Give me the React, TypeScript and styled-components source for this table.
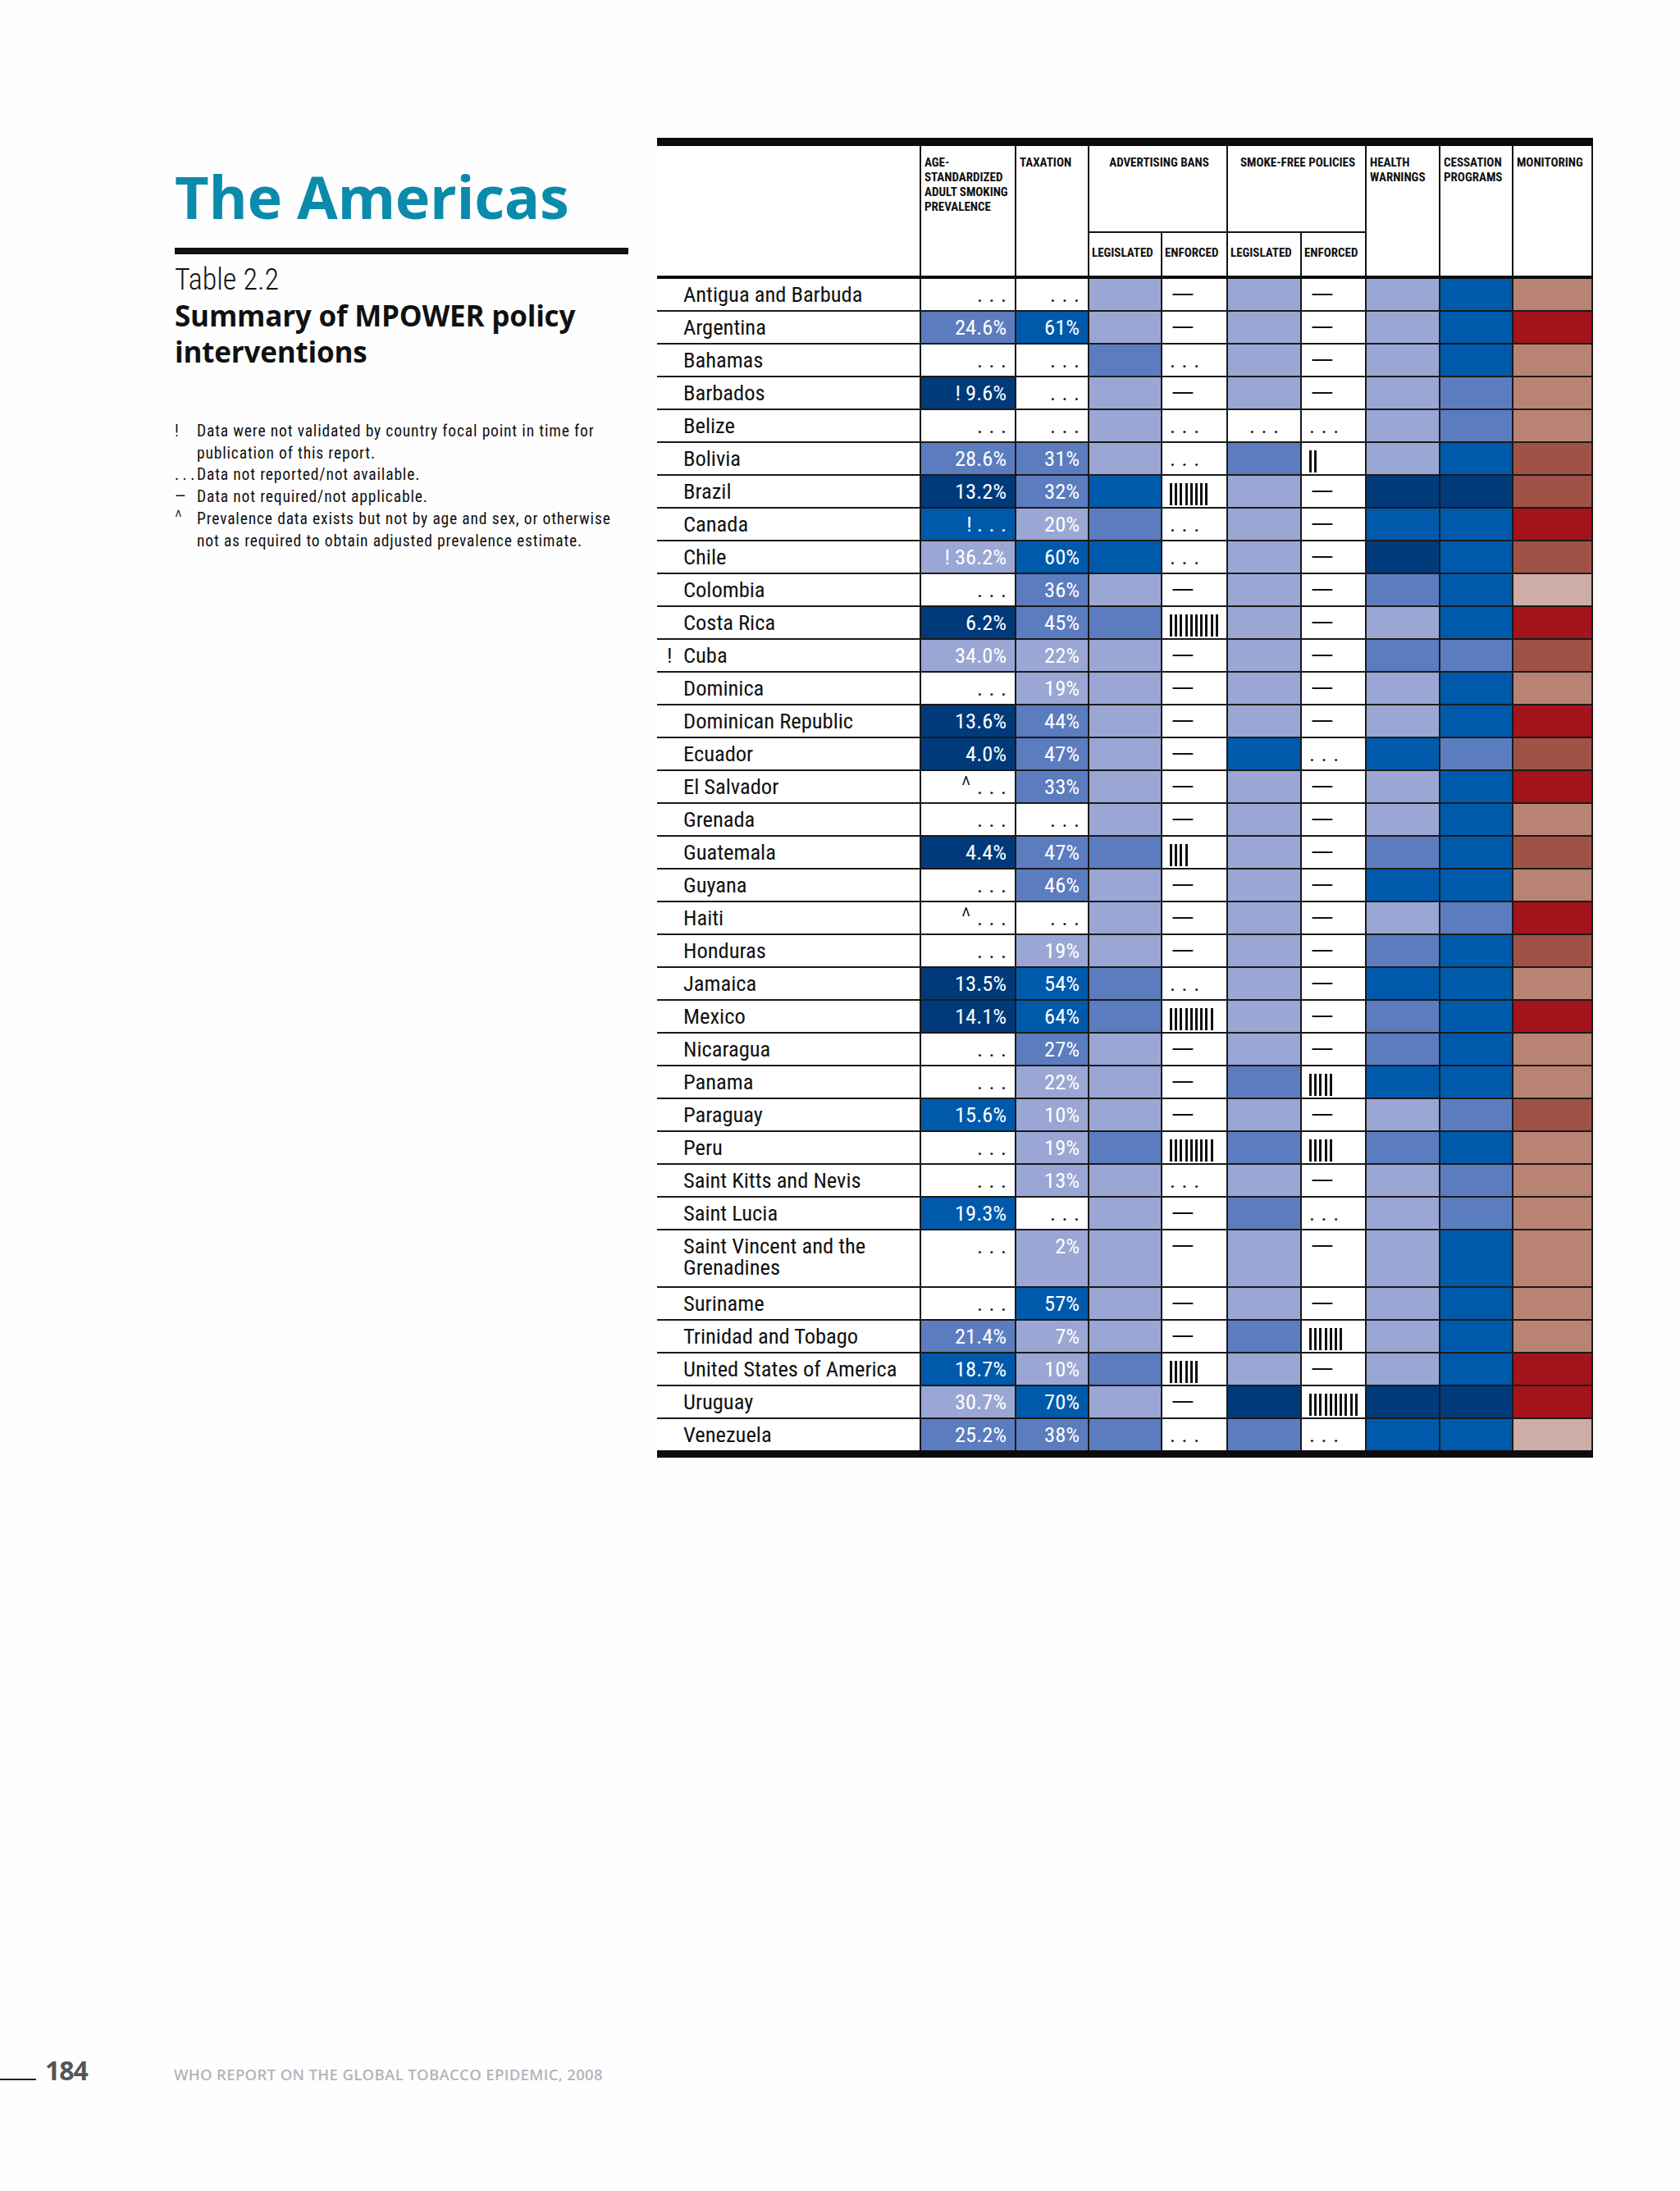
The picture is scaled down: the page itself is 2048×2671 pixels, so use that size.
import React from "react";
import styled, { createGlobalStyle } from "styled-components";

const COND = `"Roboto Condensed", "Open Sans", "Liberation Sans", sans-serif`;
const HUM = `"Open Sans", "Noto Sans", "Liberation Sans", sans-serif`;

const GlobalStyle = createGlobalStyle`
  html, body { margin: 0; padding: 0; background: #fefefe; }
  body { font-family: ${COND}; color: #111; }
`;

const C: Record<string, string> = {
  W: "#ffffff",
  L: "#9aa7d4",
  M: "#5b7cbf",
  S: "#005aac",
  N: "#003a7a",
  T: "#b88373",
  R: "#a3141c",
  B: "#a05246",
  P: "#cdada5",
};

type Sym = "-" | "." | number;
interface Row {
  name: string;
  flag?: string;
  prev: string;
  pc: string;
  tax: string;
  tc: string;
  advL: string;
  advE: Sym;
  sfL: string;
  sfE: Sym;
  hw: string;
  ces: string;
  mon: string;
  tall?: boolean;
}

const D = ". . .";

const r = (
  name: string,
  prev: string,
  pc: string,
  tax: string,
  tc: string,
  advL: string,
  advE: Sym,
  sfL: string,
  sfE: Sym,
  hw: string,
  ces: string,
  mon: string,
  extra: Partial<Row> = {}
): Row => ({ name, prev, pc, tax, tc, advL, advE, sfL, sfE, hw, ces, mon, ...extra });

const ROWS: Row[] = [
  r("Antigua and Barbuda", D, "W", D, "W", "L", "-", "L", "-", "L", "S", "T"),
  r("Argentina", "24.6%", "M", "61%", "S", "L", "-", "L", "-", "L", "S", "R"),
  r("Bahamas", D, "W", D, "W", "M", ".", "L", "-", "L", "S", "T"),
  r("Barbados", "! 9.6%", "N", D, "W", "L", "-", "L", "-", "L", "M", "T"),
  r("Belize", D, "W", D, "W", "L", ".", ".", ".", "L", "M", "T"),
  r("Bolivia", "28.6%", "M", "31%", "M", "L", ".", "M", 2, "L", "S", "B"),
  r("Brazil", "13.2%", "N", "32%", "M", "S", 8, "L", "-", "N", "N", "B"),
  r("Canada", "! . . .", "S", "20%", "L", "M", ".", "L", "-", "S", "S", "R"),
  r("Chile", "! 36.2%", "L", "60%", "S", "S", ".", "L", "-", "N", "S", "B"),
  r("Colombia", D, "W", "36%", "M", "L", "-", "L", "-", "M", "S", "P"),
  r("Costa Rica", "6.2%", "N", "45%", "M", "M", 10, "L", "-", "L", "S", "R"),
  r("Cuba", "34.0%", "L", "22%", "L", "L", "-", "L", "-", "M", "M", "B", { flag: "!" }),
  r("Dominica", D, "W", "19%", "L", "L", "-", "L", "-", "L", "S", "T"),
  r("Dominican Republic", "13.6%", "N", "44%", "M", "L", "-", "L", "-", "L", "S", "R"),
  r("Ecuador", "4.0%", "N", "47%", "M", "L", "-", "S", ".", "S", "M", "B"),
  r("El Salvador", "^ . . .", "W", "33%", "M", "L", "-", "L", "-", "L", "S", "R"),
  r("Grenada", D, "W", D, "W", "L", "-", "L", "-", "L", "S", "T"),
  r("Guatemala", "4.4%", "N", "47%", "M", "M", 4, "L", "-", "M", "S", "B"),
  r("Guyana", D, "W", "46%", "M", "L", "-", "L", "-", "S", "S", "T"),
  r("Haiti", "^ . . .", "W", D, "W", "L", "-", "L", "-", "L", "M", "R"),
  r("Honduras", D, "W", "19%", "L", "L", "-", "L", "-", "M", "S", "B"),
  r("Jamaica", "13.5%", "N", "54%", "S", "M", ".", "L", "-", "S", "S", "T"),
  r("Mexico", "14.1%", "N", "64%", "S", "M", 9, "L", "-", "M", "S", "R"),
  r("Nicaragua", D, "W", "27%", "M", "L", "-", "L", "-", "M", "S", "T"),
  r("Panama", D, "W", "22%", "L", "L", "-", "M", 5, "S", "S", "T"),
  r("Paraguay", "15.6%", "S", "10%", "L", "L", "-", "L", "-", "L", "M", "B"),
  r("Peru", D, "W", "19%", "L", "M", 9, "M", 5, "M", "S", "T"),
  r("Saint Kitts and Nevis", D, "W", "13%", "L", "L", ".", "L", "-", "L", "M", "T"),
  r("Saint Lucia", "19.3%", "S", D, "W", "L", "-", "M", ".", "L", "M", "T"),
  r("Saint Vincent and the Grenadines", D, "W", "2%", "L", "L", "-", "L", "-", "L", "S", "T", { tall: true }),
  r("Suriname", D, "W", "57%", "S", "L", "-", "L", "-", "L", "S", "T"),
  r("Trinidad and Tobago", "21.4%", "M", "7%", "L", "L", "-", "M", 7, "L", "S", "T"),
  r("United States of America", "18.7%", "S", "10%", "L", "M", 6, "L", "-", "L", "S", "R"),
  r("Uruguay", "30.7%", "L", "70%", "S", "L", "-", "N", 10, "N", "N", "R"),
  r("Venezuela", "25.2%", "M", "38%", "M", "M", ".", "M", ".", "S", "S", "P"),
];

const COLS = "320px 114px 87px 87px 78px 88px 77px 88px 87px 95px";

/* ---------- page ---------- */

const Page = styled.div`
  width: 2048px;
  min-height: 2671px;
  box-sizing: border-box;
  padding-top: 168px;
  display: flex;
  flex-direction: column;
`;

const Main = styled.div`
  display: flex;
  align-items: flex-start;
  padding-left: 213px;
`;

const Side = styled.aside`
  width: 553px;
  flex: none;
`;

const Title = styled.h1`
  margin: 34.5px 0 0;
  font-family: ${HUM};
  font-weight: 700;
  font-size: 72px;
  line-height: 72px;
  color: #0b8bab;
  letter-spacing: -0.3px;
`;

const SideRule = styled.div`
  margin-top: 27.5px;
  height: 8px;
  background: #111;
`;

const TableNo = styled.div`
  margin-top: 12.8px;
  font-family: ${COND};
  font-weight: 300;
  font-size: 36px;
  line-height: 37px;
  color: #111;
`;

const TableName = styled.h2`
  margin: 3.6px 0 0;
  font-family: ${HUM};
  font-weight: 700;
  font-size: 35px;
  line-height: 44px;
  color: #111;
  letter-spacing: -0.2px;
`;

const Notes = styled.div`
  margin-top: 61.6px;
  display: grid;
  grid-template-columns: 27px 1fr;
  font-family: ${COND};
  font-size: 19.5px;
  line-height: 26.7px;
  color: #111;
`;

const NoteMark = styled.span`
  white-space: nowrap;
`;

const NoteText = styled.span`
  white-space: nowrap;
  letter-spacing: 0.85px;
`;

const Caret = styled.span<{ $size: number }>`
  font-size: ${(p) => p.$size}px;
  font-weight: 300;
  line-height: 0;
`;

/* ---------- table ---------- */

const TableWrap = styled.div`
  margin-left: 35px;
  width: 1141px;
  flex: none;
`;

const Bar = styled.div<{ $h: number }>`
  height: ${(p) => p.$h}px;
  background: #0c0c0c;
`;

const HeadGrid = styled.div`
  display: grid;
  grid-template-columns: ${COLS};
  grid-template-rows: 104px 52px;
  gap: 2px;
  padding-right: 2px;
  background: #141414;
`;

const HeadCell = styled.div<{ $col: string; $row: string; $center?: boolean; $mid?: boolean }>`
  grid-column: ${(p) => p.$col};
  grid-row: ${(p) => p.$row};
  background: #fff;
  box-sizing: border-box;
  padding: ${(p) => (p.$mid ? "0 1px 5px 3px" : "10.5px 1px 0 4px")};
  display: flex;
  flex-direction: column;
  justify-content: ${(p) => (p.$mid ? "center" : "flex-start")};
  align-items: ${(p) => (p.$center ? "center" : "flex-start")};
  font-family: ${COND};
  font-weight: 700;
  font-size: 15px;
  line-height: 18px;
  color: #111;
  white-space: nowrap;
  text-transform: uppercase;
`;

const BodyGrid = styled.div<{ $rows: string }>`
  display: grid;
  grid-template-columns: ${COLS};
  grid-template-rows: ${(p) => p.$rows};
  gap: 2px;
  padding-right: 2px;
  background: #1a1a1a;
`;

const NameCell = styled.div`
  background: #fff;
  display: flex;
  align-items: flex-start;
  box-sizing: border-box;
  padding: 6px 10px 0 12px;
  font-size: 26.5px;
  line-height: 26px;
  color: #111;
`;

const Flag = styled.span`
  width: 20px;
  flex: none;
`;

const ValueCell = styled.div<{ $bg: string }>`
  background: ${(p) => C[p.$bg]};
  color: ${(p) => (p.$bg === "W" ? "#111" : "#fff")};
  box-sizing: border-box;
  padding: 6px 10px 0 0;
  text-align: right;
  font-size: 26.5px;
  line-height: 26px;
  white-space: nowrap;
`;

const Dots = styled.span`
  word-spacing: 1.5px;
`;

const ColorCell = styled.div<{ $bg: string }>`
  background: ${(p) => C[p.$bg]};
`;

const SymCell = styled.div<{ $center?: boolean }>`
  background: #fff;
  box-sizing: border-box;
  padding: 6px 0 0 ${(p) => (p.$center ? "0" : "9px")};
  text-align: ${(p) => (p.$center ? "center" : "left")};
  font-size: 26.5px;
  line-height: 26px;
  color: #111;
  white-space: nowrap;
`;

const DashMark = styled.span`
  display: inline-block;
  transform: scaleX(1.7);
  transform-origin: left center;
`;

const Bars = styled.div`
  display: flex;
  gap: 3.2px;
  margin-top: 3px;
`;

const Tick = styled.span`
  width: 3px;
  height: 27px;
  background: #111;
`;

const Value = ({ v }: { v: string }) => {
  if (v.endsWith(D)) {
    const pre = v.slice(0, v.length - D.length);
    return (
      <>
        {pre.startsWith("^") ? <Caret $size={32}>^ </Caret> : pre}
        <Dots>{D}</Dots>
      </>
    );
  }
  return <>{v}</>;
};

const Symbol = ({ s }: { s: Sym }) => {
  if (s === "-")
    return (
      <SymCell>
        <DashMark>—</DashMark>
      </SymCell>
    );
  if (s === ".")
    return (
      <SymCell>
        <Dots>{D}</Dots>
      </SymCell>
    );
  return (
    <SymCell>
      <Bars>
        {Array.from({ length: s }).map((_, i) => (
          <Tick key={i} />
        ))}
      </Bars>
    </SymCell>
  );
};

/* ---------- footer ---------- */

const Footer = styled.footer`
  margin-top: auto;
  padding-bottom: 131px;
  display: flex;
  align-items: baseline;
`;

const FootLine = styled.span`
  display: inline-block;
  width: 44px;
  height: 2px;
  background: #222;
`;

const PageNo = styled.span`
  margin-left: 11px;
  font-family: ${HUM};
  font-weight: 700;
  font-size: 32px;
  line-height: 32px;
  color: #555;
  letter-spacing: -1px;
`;

const FootText = styled.span`
  margin-left: 105px;
  font-family: ${HUM};
  font-weight: 600;
  font-size: 18.5px;
  line-height: 18px;
  letter-spacing: 0.35px;
  color: #b4b4bb;
`;

export default function App() {
  const rows = ROWS.map((x) => (x.tall ? "68px" : "38px")).join(" ");
  return (
    <>
      <GlobalStyle />
      <Page>
        <Main>
          <Side>
            <Title>The Americas</Title>
            <SideRule />
            <TableNo>Table 2.2</TableNo>
            <TableName>
              Summary of MPOWER policy
              <br />
              interventions
            </TableName>
            <Notes>
              <NoteMark>!</NoteMark>
              <NoteText>
                Data were not validated by country focal point in time for
                <br />
                publication of this report.
              </NoteText>
              <NoteMark>. . .</NoteMark>
              <NoteText>Data not reported/not available.</NoteText>
              <NoteMark>—</NoteMark>
              <NoteText>Data not required/not applicable.</NoteText>
              <NoteMark>
                <Caret $size={24}>^</Caret>
              </NoteMark>
              <NoteText>
                Prevalence data exists but not by age and sex, or otherwise
                <br />
                not as required to obtain adjusted prevalence estimate.
              </NoteText>
            </Notes>
          </Side>

          <TableWrap>
            <Bar $h={10} />
            <HeadGrid>
              <HeadCell $col="1" $row="1 / 3" />
              <HeadCell $col="2" $row="1 / 3">
                <span>Age-</span>
                <span>Standardized</span>
                <span>Adult smoking</span>
                <span>Prevalence</span>
              </HeadCell>
              <HeadCell $col="3" $row="1 / 3">Taxation</HeadCell>
              <HeadCell $col="4 / 6" $row="1" $center>Advertising bans</HeadCell>
              <HeadCell $col="6 / 8" $row="1" $center>Smoke-free policies</HeadCell>
              <HeadCell $col="8" $row="1 / 3">
                <span>Health</span>
                <span>Warnings</span>
              </HeadCell>
              <HeadCell $col="9" $row="1 / 3">
                <span>Cessation</span>
                <span>Programs</span>
              </HeadCell>
              <HeadCell $col="10" $row="1 / 3">Monitoring</HeadCell>
              <HeadCell $col="4" $row="2" $mid>Legislated</HeadCell>
              <HeadCell $col="5" $row="2" $mid>Enforced</HeadCell>
              <HeadCell $col="6" $row="2" $mid>Legislated</HeadCell>
              <HeadCell $col="7" $row="2" $mid>Enforced</HeadCell>
            </HeadGrid>
            <Bar $h={4} />
            <BodyGrid $rows={rows}>
              {ROWS.map((x) => (
                <React.Fragment key={x.name}>
                  <NameCell>
                    <Flag>{x.flag || ""}</Flag>
                    <span>{x.name}</span>
                  </NameCell>
                  <ValueCell $bg={x.pc}>
                    <Value v={x.prev} />
                  </ValueCell>
                  <ValueCell $bg={x.tc}>
                    <Value v={x.tax} />
                  </ValueCell>
                  <ColorCell $bg={x.advL} />
                  <Symbol s={x.advE} />
                  {x.sfL === "." ? (
                    <SymCell $center>
                      <Dots>{D}</Dots>
                    </SymCell>
                  ) : (
                    <ColorCell $bg={x.sfL} />
                  )}
                  <Symbol s={x.sfE} />
                  <ColorCell $bg={x.hw} />
                  <ColorCell $bg={x.ces} />
                  <ColorCell $bg={x.mon} />
                </React.Fragment>
              ))}
            </BodyGrid>
            <Bar $h={9} />
          </TableWrap>
        </Main>

        <Footer>
          <FootLine />
          <PageNo>184</PageNo>
          <FootText>WHO REPORT ON THE GLOBAL TOBACCO EPIDEMIC, 2008</FootText>
        </Footer>
      </Page>
    </>
  );
}
